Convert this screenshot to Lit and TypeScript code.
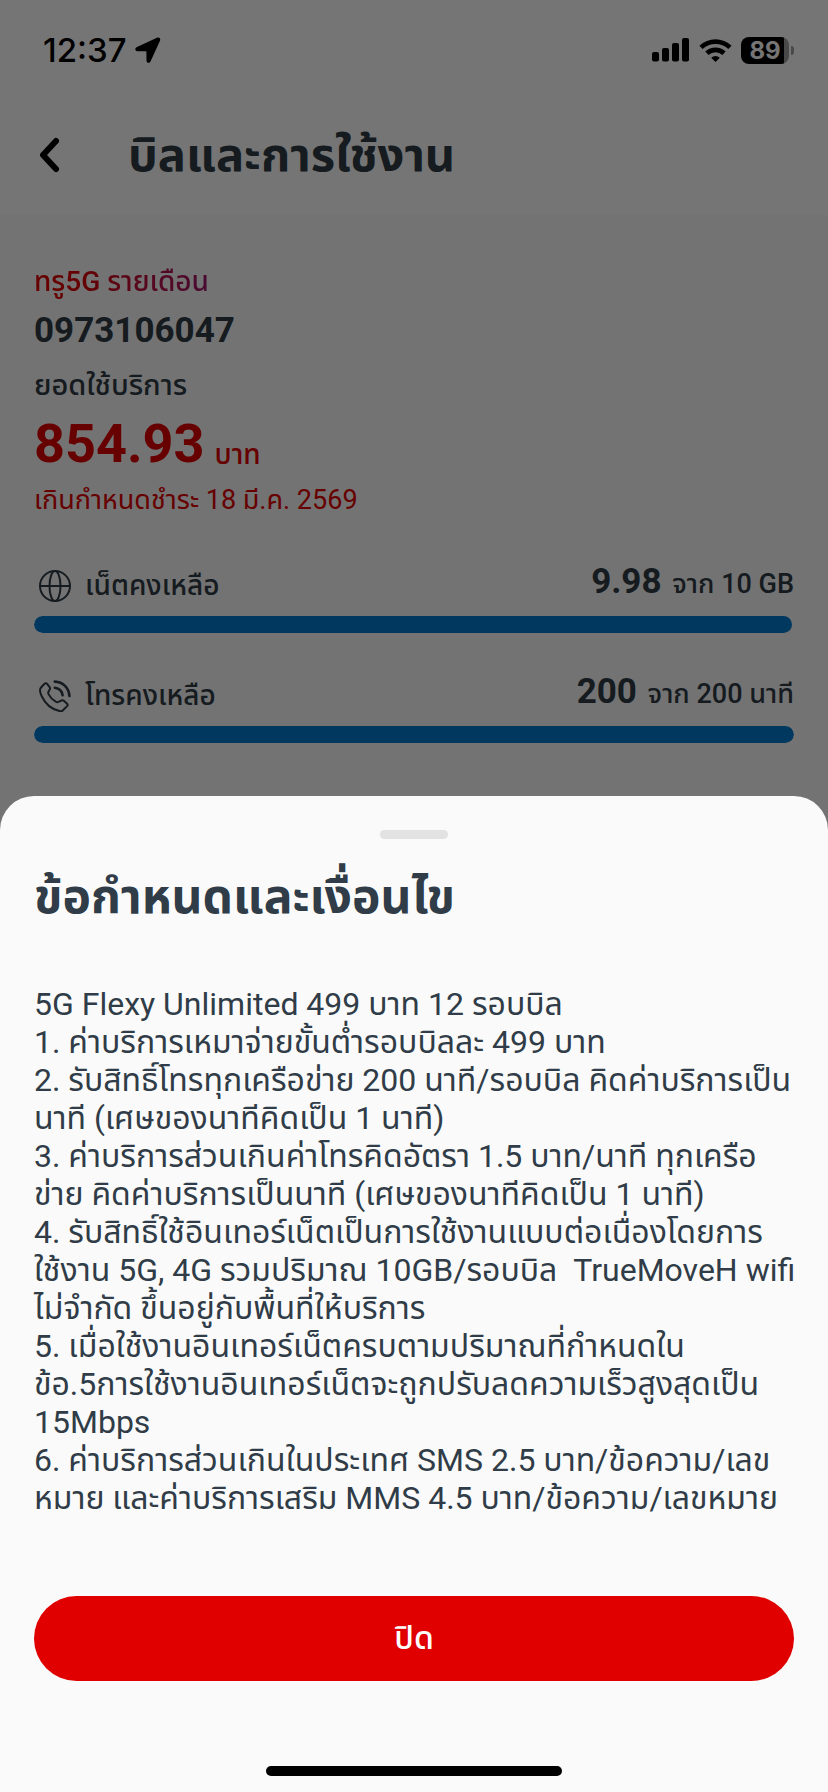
import { LitElement, html, css, svg } from "lit";
import { customElement, property } from "lit/decorators.js";

const TERMS: string[][] = [
  ["5G Flexy Unlimited 499 บาท 12 รอบบิล"],
  ["1. ค่าบริการเหมาจ่ายขั้นต่ำรอบบิลละ 499 บาท"],
  ["2. รับสิทธิ์โทรทุกเครือข่าย 200 นาที/รอบบิล คิดค่าบริการเป็น", "นาที (เศษของนาทีคิดเป็น 1 นาที)"],
  ["3. ค่าบริการส่วนเกินค่าโทรคิดอัตรา 1.5 บาท/นาที ทุกเครือ", "ข่าย คิดค่าบริการเป็นนาที (เศษของนาทีคิดเป็น 1 นาที)"],
  ["4. รับสิทธิ์ใช้อินเทอร์เน็ตเป็นการใช้งานแบบต่อเนื่องโดยการ", "ใช้งาน 5G, 4G รวมปริมาณ 10GB/รอบบิล  TrueMoveH wifi", "ไม่จำกัด ขึ้นอยู่กับพื้นที่ให้บริการ"],
  ["5. เมื่อใช้งานอินเทอร์เน็ตครบตามปริมาณที่กำหนดใน", "ข้อ.5การใช้งานอินเทอร์เน็ตจะถูกปรับลดความเร็วสูงสุดเป็น", "15Mbps"],
  ["6. ค่าบริการส่วนเกินในประเทศ SMS 2.5 บาท/ข้อความ/เลข", "หมาย และค่าบริการเสริม MMS 4.5 บาท/ข้อความ/เลขหมาย"],
];

const globe = svg`<circle cx="16" cy="16" r="15"/><ellipse cx="16" cy="16" rx="5.5" ry="15"/><path d="M1 16h30"/>`;
const phone = svg`<path d="M5.500 3.700 2 7.500C.6 9.200.9 12.500 2.600 16c3.700 8 10.200 13.600 18.600 15.200 1 .2 1.800 0 2.500-.7l4.400-4.400c.7-.8.700-1.600 0-2.300l-3.300-3c-.7-.6-1.500-.7-2.300-.3l-3 1.400c-1 .4-1.900.3-2.800-.2-3-1.800-5.600-4.500-7.200-7.600-.4-.8-.4-1.600 0-2.400l1.300-2.400c.4-.8.300-1.500-.2-2.200L8.100 3.900c-.7-.9-1.800-1-2.600-.2Z"/><path d="M15.800 1.600C24 1.900 30 7.800 30.400 16M15.800 7.700c4.400.5 7.300 3.500 7.800 7.600" stroke-width="2.600"/>`;

@customElement("usage-meter")
export class UsageMeter extends LitElement {
  @property() label = "";
  @property() icon = "globe";
  @property({ type: Number }) left = 0;
  @property({ type: Number }) total = 1;
  @property() unit = "";

  static styles = css`
    :host { display: block; }
    .row { display: flex; align-items: flex-end; height: 48px; margin-bottom: 10px; }
    .icon { width: 32px; height: 32px; margin: 0 14px 4px 5px; fill: none; stroke: #303c47; stroke-width: 2; stroke-linecap: round; stroke-linejoin: round; }
    .label { flex: 1; font-size: 28px; line-height: 40px; font-weight: 500; }
    .value { font-size: 27px; line-height: 44px; font-weight: 500; white-space: nowrap; }
    .value b { font-size: 35px; font-weight: 700; margin-right: 4px; }
    .track { height: 17px; border-radius: 9px; overflow: hidden; }
    .fill { height: 100%; border-radius: 9px; background: #007ad0; }
  `;

  render() {
    return html`
      <div class="row">
        <svg class="icon" viewBox="0 0 32 32" aria-hidden="true">${this.icon === "globe" ? globe : phone}</svg>
        <span class="label">${this.label}</span>
        <span class="value"><b>${this.left}</b> จาก ${this.total} ${this.unit}</span>
      </div>
      <div class="track" role="progressbar" aria-label=${this.label} aria-valuenow=${this.left} aria-valuemax=${this.total}>
        <div class="fill" style="width:${(this.left / this.total) * 100}%"></div>
      </div>
    `;
  }
}

@customElement("app-root")
export class AppRoot extends LitElement {
  static styles = css`
    :host {
      display: grid;
      min-height: 100vh;
      background: #fafafa;
      color: #303c47;
      font-family: Roboto, "Noto Sans Thai", "Noto Sans", sans-serif;
      overflow: hidden;
    }
    .page, .scrim { grid-area: 1 / 1; min-width: 0; }
    .top { background: #ffffff; height: 215px; }
    .status { display: flex; align-items: center; height: 100px; padding: 0 34px 0 43px; color: #000; font-family: Inter, sans-serif; }
    .time { font-size: 33px; line-height: 40px; font-weight: 500; }
    .arrow { width: 26px; height: 26px; margin-left: 8px; }
    .system { display: flex; align-items: center; gap: 9px; margin-left: auto; }
    .signal { width: 38px; height: 24px; }
    .wifi { width: 33px; height: 24px; }
    .battery { display: flex; align-items: center; gap: 2px; }
    .level { width: 48px; height: 27px; border-radius: 8px; text-align: center; color: #fff; font-size: 24px; line-height: 27px; font-weight: 700; background: linear-gradient(90deg, #000 90%, #a0a0a0 90%); }
    .nub { width: 3px; height: 9px; border-radius: 0 4px 4px 0; background: #a0a0a0; }
    .bar { display: flex; align-items: center; height: 110px; padding-left: 34px; }
    .back { width: 32px; height: 48px; padding: 0; border: 0; background: none; }
    .back svg { display: block; width: 32px; height: 48px; fill: none; stroke: #000; stroke-width: 6; stroke-linecap: round; stroke-linejoin: round; }
    h1, h2, p { margin: 0; }
    h1 { margin-left: 62px; font-size: 47px; line-height: 64px; font-weight: 700; }
    .bill { padding: 46px 34px 0; }
    .plan { width: fit-content; font-size: 28px; line-height: 42px; font-weight: 500; color: transparent; background: linear-gradient(90deg, #e00000 20%, #c0103c 60%, #a01870); background-clip: text; -webkit-background-clip: text; }
    .number { font-size: 35px; line-height: 56px; font-weight: 700; }
    .caption { font-size: 29px; line-height: 52px; font-weight: 500; }
    .amount { color: #e00000; display: flex; gap: 10px; align-items: flex-end; height: 65px; }
    .amount b { font-size: 54px; line-height: 65px; font-weight: 700; }
    .amount span { font-size: 28px; line-height: 42px; font-weight: 500; }
    .due { color: #e00000; font-size: 27px; line-height: 48px; }
    .meters { display: grid; gap: 35px; padding-top: 34px; }
    .scrim { display: flex; flex-direction: column; justify-content: flex-end; background: rgba(0, 0, 0, 0.54); z-index: 1; }
    .sheet { background: #fafafa; border-radius: 34px 34px 0 0; padding: 34px 34px 16px; }
    .handle { width: 68px; height: 9px; border-radius: 5px; background: #e2e2e2; margin: 0 auto; }
    h2 { margin-top: 26px; font-size: 48px; line-height: 64px; font-weight: 700; }
    .terms { margin-top: 56px; font-size: 32px; line-height: 38px; white-space: pre; }
    .line { display: block; }
    .close { display: block; width: 100%; height: 85px; margin-top: 79px; border: 0; border-radius: 43px; background: #e00000; color: #fff; font-family: inherit; font-size: 32px; font-weight: 500; }
    .home { width: 296px; height: 10px; border-radius: 5px; background: #000; margin: 85px auto 0; }
  `;

  render() {
    return html`
      <div class="page">
        <header class="top">
          <div class="status">
            <span class="time">12:37</span>
            <svg class="arrow" viewBox="0 0 26 26" aria-hidden="true"><path d="M22 .8 2 10C-.4 11.200-.2 14 2.400 14.200l8.200.1c.5 0 .8.300.8.800l.1 8.300c.1 2.600 3 3.200 4.100.8L25 3.800c.9-2.100-.8-3.900-3-3Z"/></svg>
            <div class="system">
              <svg class="signal" viewBox="0 0 38 24" aria-hidden="true"><rect y="14" width="7" height="9.500" rx="2"/><rect x="10" y="10" width="7" height="13.500" rx="2"/><rect x="20" y="5" width="7" height="18.500" rx="2"/><rect x="30" width="7" height="23.500" rx="2"/></svg>
              <svg class="wifi" viewBox="0 0 33 24" aria-hidden="true"><path d="m16.500 24-4.300-4.300a6.500 6.500 0 0 1 8.600 0ZM6.300 13.600a15 15 0 0 1 20.400 0l-3.300 3.300a10.400 10.400 0 0 0-13.800 0ZM.4 7.700a23.500 23.500 0 0 1 32.200 0L29.300 11a18.800 18.800 0 0 0-25.600 0Z"/></svg>
              <div class="battery"><div class="level">89</div><div class="nub"></div></div>
            </div>
          </div>
          <div class="bar">
            <button class="back" aria-label="ย้อนกลับ"><svg viewBox="0 0 32 48"><path d="M22 10 9 24l13 14"/></svg></button>
            <h1>บิลและการใช้งาน</h1>
          </div>
        </header>
        <main class="bill">
          <p class="plan">ทรู5G รายเดือน</p>
          <p class="number">0973106047</p>
          <p class="caption">ยอดใช้บริการ</p>
          <p class="amount"><b>854.93</b><span>บาท</span></p>
          <p class="due">เกินกำหนดชำระ 18 มี.ค. 2569</p>
          <div class="meters">
            <usage-meter label="เน็ตคงเหลือ" icon="globe" .left=${9.98} .total=${10} unit="GB"></usage-meter>
            <usage-meter label="โทรคงเหลือ" icon="phone" .left=${200} .total=${200} unit="นาที"></usage-meter>
          </div>
        </main>
      </div>
      <div class="scrim">
        <section class="sheet" role="dialog" aria-modal="true" aria-labelledby="terms-title">
          <div class="handle"></div>
          <h2 id="terms-title">ข้อกำหนดและเงื่อนไข</h2>
          <div class="terms">${TERMS.map((t) => html`<p>${t.map((l) => html`<span class="line">${l}</span>`)}</p>`)}</div>
          <button class="close">ปิด</button>
          <div class="home"></div>
        </section>
      </div>
    `;
  }
}
